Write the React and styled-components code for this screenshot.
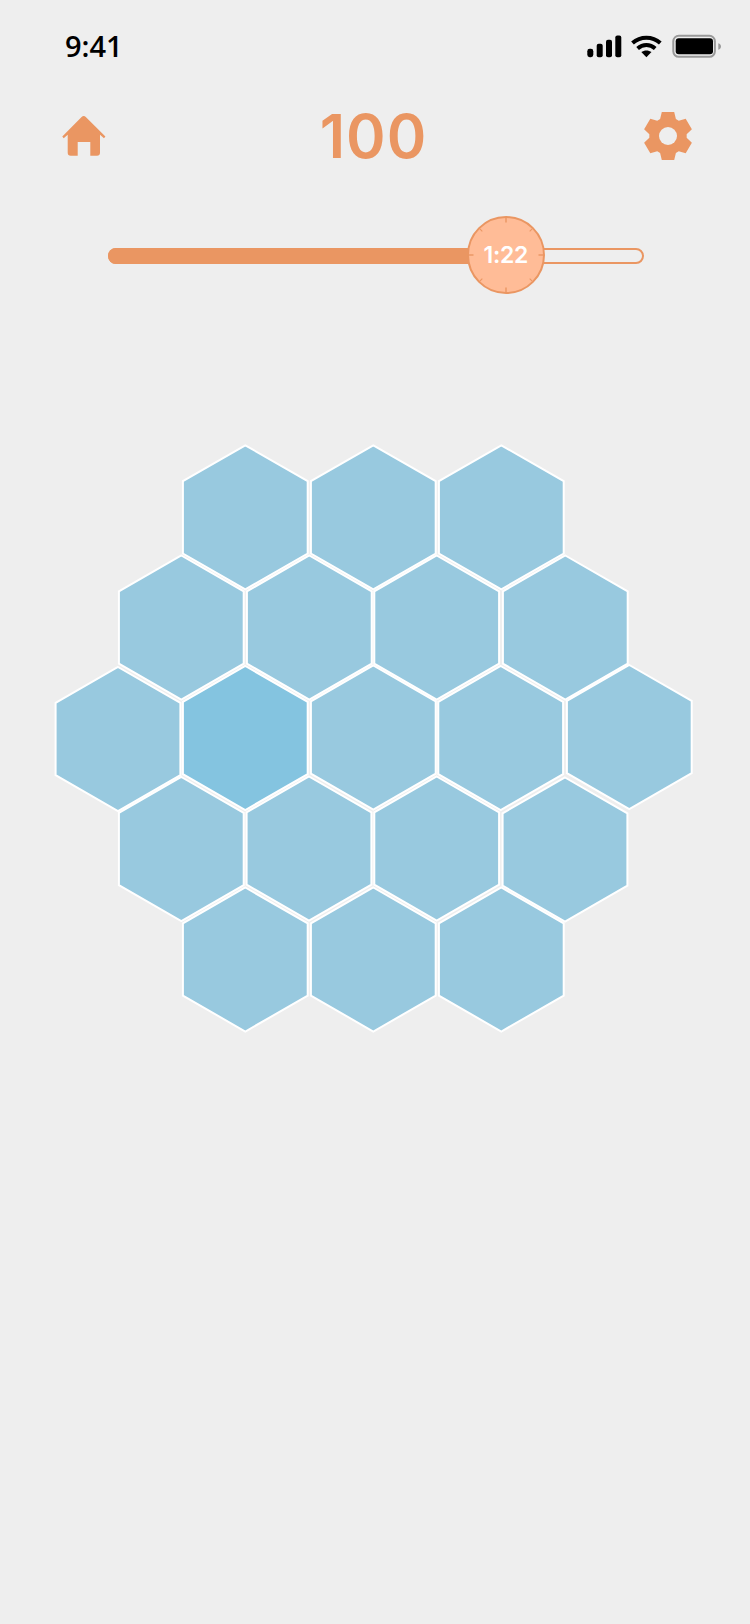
import React from 'react';
import styled, { createGlobalStyle } from 'styled-components';

const ORANGE = '#ea9662';
const PAGE = '#eeeeee';
const BOARD_TOP = 430;

const GlobalStyle = createGlobalStyle`
  html, body {
    margin: 0;
    padding: 0;
    background: ${PAGE};
  }
`;

const Screen = styled.div`
  width: 750px;
  height: 1624px;
  overflow: hidden;
  background: ${PAGE};
`;

const StatusBar = styled.div`
  display: flex;
  align-items: center;
  justify-content: space-between;
  height: 24px;
  padding: 34px 28px 0 65px;
`;

const Clock = styled.span`
  font-family: 'Open Sans', sans-serif;
  font-size: 29px;
  font-weight: 600;
  line-height: 24px;
  color: #000;
`;

const StatusIcons = styled.svg`
  display: block;
  width: 136px;
  height: 24px;
`;

const Header = styled.div`
  display: grid;
  grid-template-columns: 1fr auto 1fr;
  align-items: center;
  height: 60px;
  margin-top: 48px;
  padding: 0 57px 0 60px;
`;

const Score = styled.div`
  font-family: Inter, sans-serif;
  font-size: 60px;
  font-weight: 600;
  line-height: 60px;
  letter-spacing: 1px;
  color: ${ORANGE};
  transform: translateX(-3px);
`;

const HomeIcon = styled.svg`
  display: block;
  justify-self: start;
  width: 48px;
  height: 44px;
`;

const GearIcon = styled.svg`
  display: block;
  justify-self: end;
  width: 50px;
  height: 50px;
`;

const Track = styled.div`
  position: relative;
  box-sizing: border-box;
  width: 536px;
  height: 16px;
  margin: 82px 0 0 108px;
  border: 2px solid ${ORANGE};
  border-radius: 8px;
`;

const TrackFill = styled.div`
  height: 100%;
  margin: -2px 0 0 -2px;
  padding-bottom: 4px;
  border-radius: 8px 0 0 8px;
  background: ${ORANGE};
`;

const Thumb = styled.div`
  position: absolute;
  top: calc(50% - 1px);
  width: 78px;
  height: 78px;
  transform: translate(-50%, -50%);
  display: flex;
  align-items: center;
  justify-content: center;
`;

const ThumbFace = styled.svg`
  position: absolute;
  inset: 0;
  width: 78px;
  height: 78px;
`;

const ThumbLabel = styled.span`
  position: relative;
  font-family: Inter, sans-serif;
  font-size: 23px;
  font-weight: 600;
  letter-spacing: -0.3px;
  color: #fff;
`;

const Board = styled.svg`
  display: block;
  width: 750px;
  height: 620px;
  margin-top: 166px;
`;

const Cell = styled.polygon`
  fill: ${props => (props.$active ? '#84c4e0' : '#98c9df')};
  stroke: #fff;
  stroke-width: 2;
  stroke-linejoin: miter;
`;

// x, y are the centres of the cells in page pixels
const cells = [
  { x: 245.3, y: 517.3 }, { x: 373.3, y: 517.3 }, { x: 501.3, y: 517.3 },
  { x: 181.3, y: 627.5 }, { x: 309.3, y: 627.5 }, { x: 436.7, y: 627.5 }, { x: 565.3, y: 627.5 },
  { x: 118, y: 739 }, { x: 245.3, y: 738, active: true }, { x: 373.3, y: 737.5 }, { x: 500.7, y: 738 }, { x: 629.3, y: 737 },
  { x: 181.3, y: 849 }, { x: 309, y: 848.5 }, { x: 436.7, y: 848.5 }, { x: 565, y: 849.5 },
  { x: 245.3, y: 959.5 }, { x: 373.3, y: 959.5 }, { x: 501.3, y: 959.5 },
];

const hexPoints = (x, y) => {
  const w = 62.4;
  const h = 72;
  const s = 36.2;
  return [
    [x, y - h], [x + w, y - s], [x + w, y + s],
    [x, y + h], [x - w, y + s], [x - w, y - s],
  ].map(p => p.join(',')).join(' ');
};

const gearPoints = () => {
  const pts = [];
  for (let i = 0; i < 6; i += 1) {
    const a = (Math.PI / 3) * i - Math.PI / 2;
    const at = (r, d) => {
      const px = Math.cos(a) * r - Math.sin(a) * d;
      const py = Math.sin(a) * r + Math.cos(a) * d;
      return `${(25 + px).toFixed(2)},${(25 + py).toFixed(2)}`;
    };
    pts.push(at(17, -7.9), at(24, -6.2), at(24, 6.2), at(17, 7.9));
  }
  return pts.join(' ');
};

const StatusGlyphs = () => (
  <StatusIcons viewBox="586 33.5 136 24">
    <rect x="587.3" y="48.3" width="6" height="8.4" rx="2.4" fill="#000" />
    <rect x="596.7" y="43.3" width="6" height="13.4" rx="2" fill="#000" />
    <rect x="606" y="39.3" width="6" height="17.4" rx="2" fill="#000" />
    <rect x="615.3" y="35" width="6" height="21.7" rx="2" fill="#000" />
    <g fill="none" stroke="#000" strokeWidth="4">
      <path d="M632.5 42.6C640.5 35.3 652.3 35.3 660.3 42.6" />
      <path d="M637.6 47.9C642.8 43.3 650 43.3 655.2 47.9" />
    </g>
    <path d="M641.3 51.6C644.3 49.4 648.5 49.4 651.5 51.6L646.4 56.8Z" fill="#000" />
    <rect x="673.3" y="35.3" width="41.6" height="21" rx="5.5" fill="none" stroke="#999" strokeWidth="2" />
    <rect x="675.7" y="37.7" width="37.3" height="16" rx="3" fill="#000" />
    <path d="M718.3 42.7C720 43.2 721 44.4 721 46C721 47.6 720 48.8 718.3 49.3Z" fill="#999" />
  </StatusIcons>
);

const Home = () => (
  <HomeIcon viewBox="60 114 48 44">
    <path
      d="M81.6 117C82.8 115.7 84.6 115.7 85.8 117L105.4 136.6L104 138.3L100 134.8V152.7C100 154.4 98.9 155.7 97 155.7H90.3V142H77.7V155.7H70.7C68.8 155.7 67.7 154.4 67.7 152.7V134.8L63.7 138.3L62.3 136.6Z"
      fill={ORANGE}
    />
  </HomeIcon>
);

const Gear = () => (
  <GearIcon viewBox="0 0 50 50">
    <polygon points={gearPoints()} fill={ORANGE} />
    <circle cx="25" cy="25" r="9" fill={PAGE} />
  </GearIcon>
);

const ticks = [0, 45, 90, 135, 180, 225, 270, 315];

const Face = () => (
  <ThumbFace viewBox="0 0 78 78">
    <circle cx="39" cy="39" r="38" fill="#ffbc97" stroke={ORANGE} strokeWidth="2" />
    {ticks.map(t => (
      <line
        key={t}
        x1="39"
        y1="2"
        x2="39"
        y2={t % 90 === 0 ? 6.5 : 5.5}
        stroke={ORANGE}
        strokeWidth={t % 90 === 0 ? 1.4 : 1}
        transform={`rotate(${t} 39 39)`}
      />
    ))}
  </ThumbFace>
);

const App = () => {
  const progress = 74.4;
  return (
    <Screen>
      <GlobalStyle />
      <StatusBar>
        <Clock>9:41</Clock>
        <StatusGlyphs />
      </StatusBar>
      <Header>
        <Home />
        <Score>100</Score>
        <Gear />
      </Header>
      <Track>
        <TrackFill style={{ width: `${progress}%` }} />
        <Thumb style={{ left: `${progress}%` }}>
          <Face />
          <ThumbLabel>1:22</ThumbLabel>
        </Thumb>
      </Track>
      <Board viewBox={`0 ${BOARD_TOP} 750 620`}>
        {cells.map(c => (
          <Cell key={`${c.x}-${c.y}`} points={hexPoints(c.x, c.y)} $active={c.active} />
        ))}
      </Board>
    </Screen>
  );
};

export default App;
